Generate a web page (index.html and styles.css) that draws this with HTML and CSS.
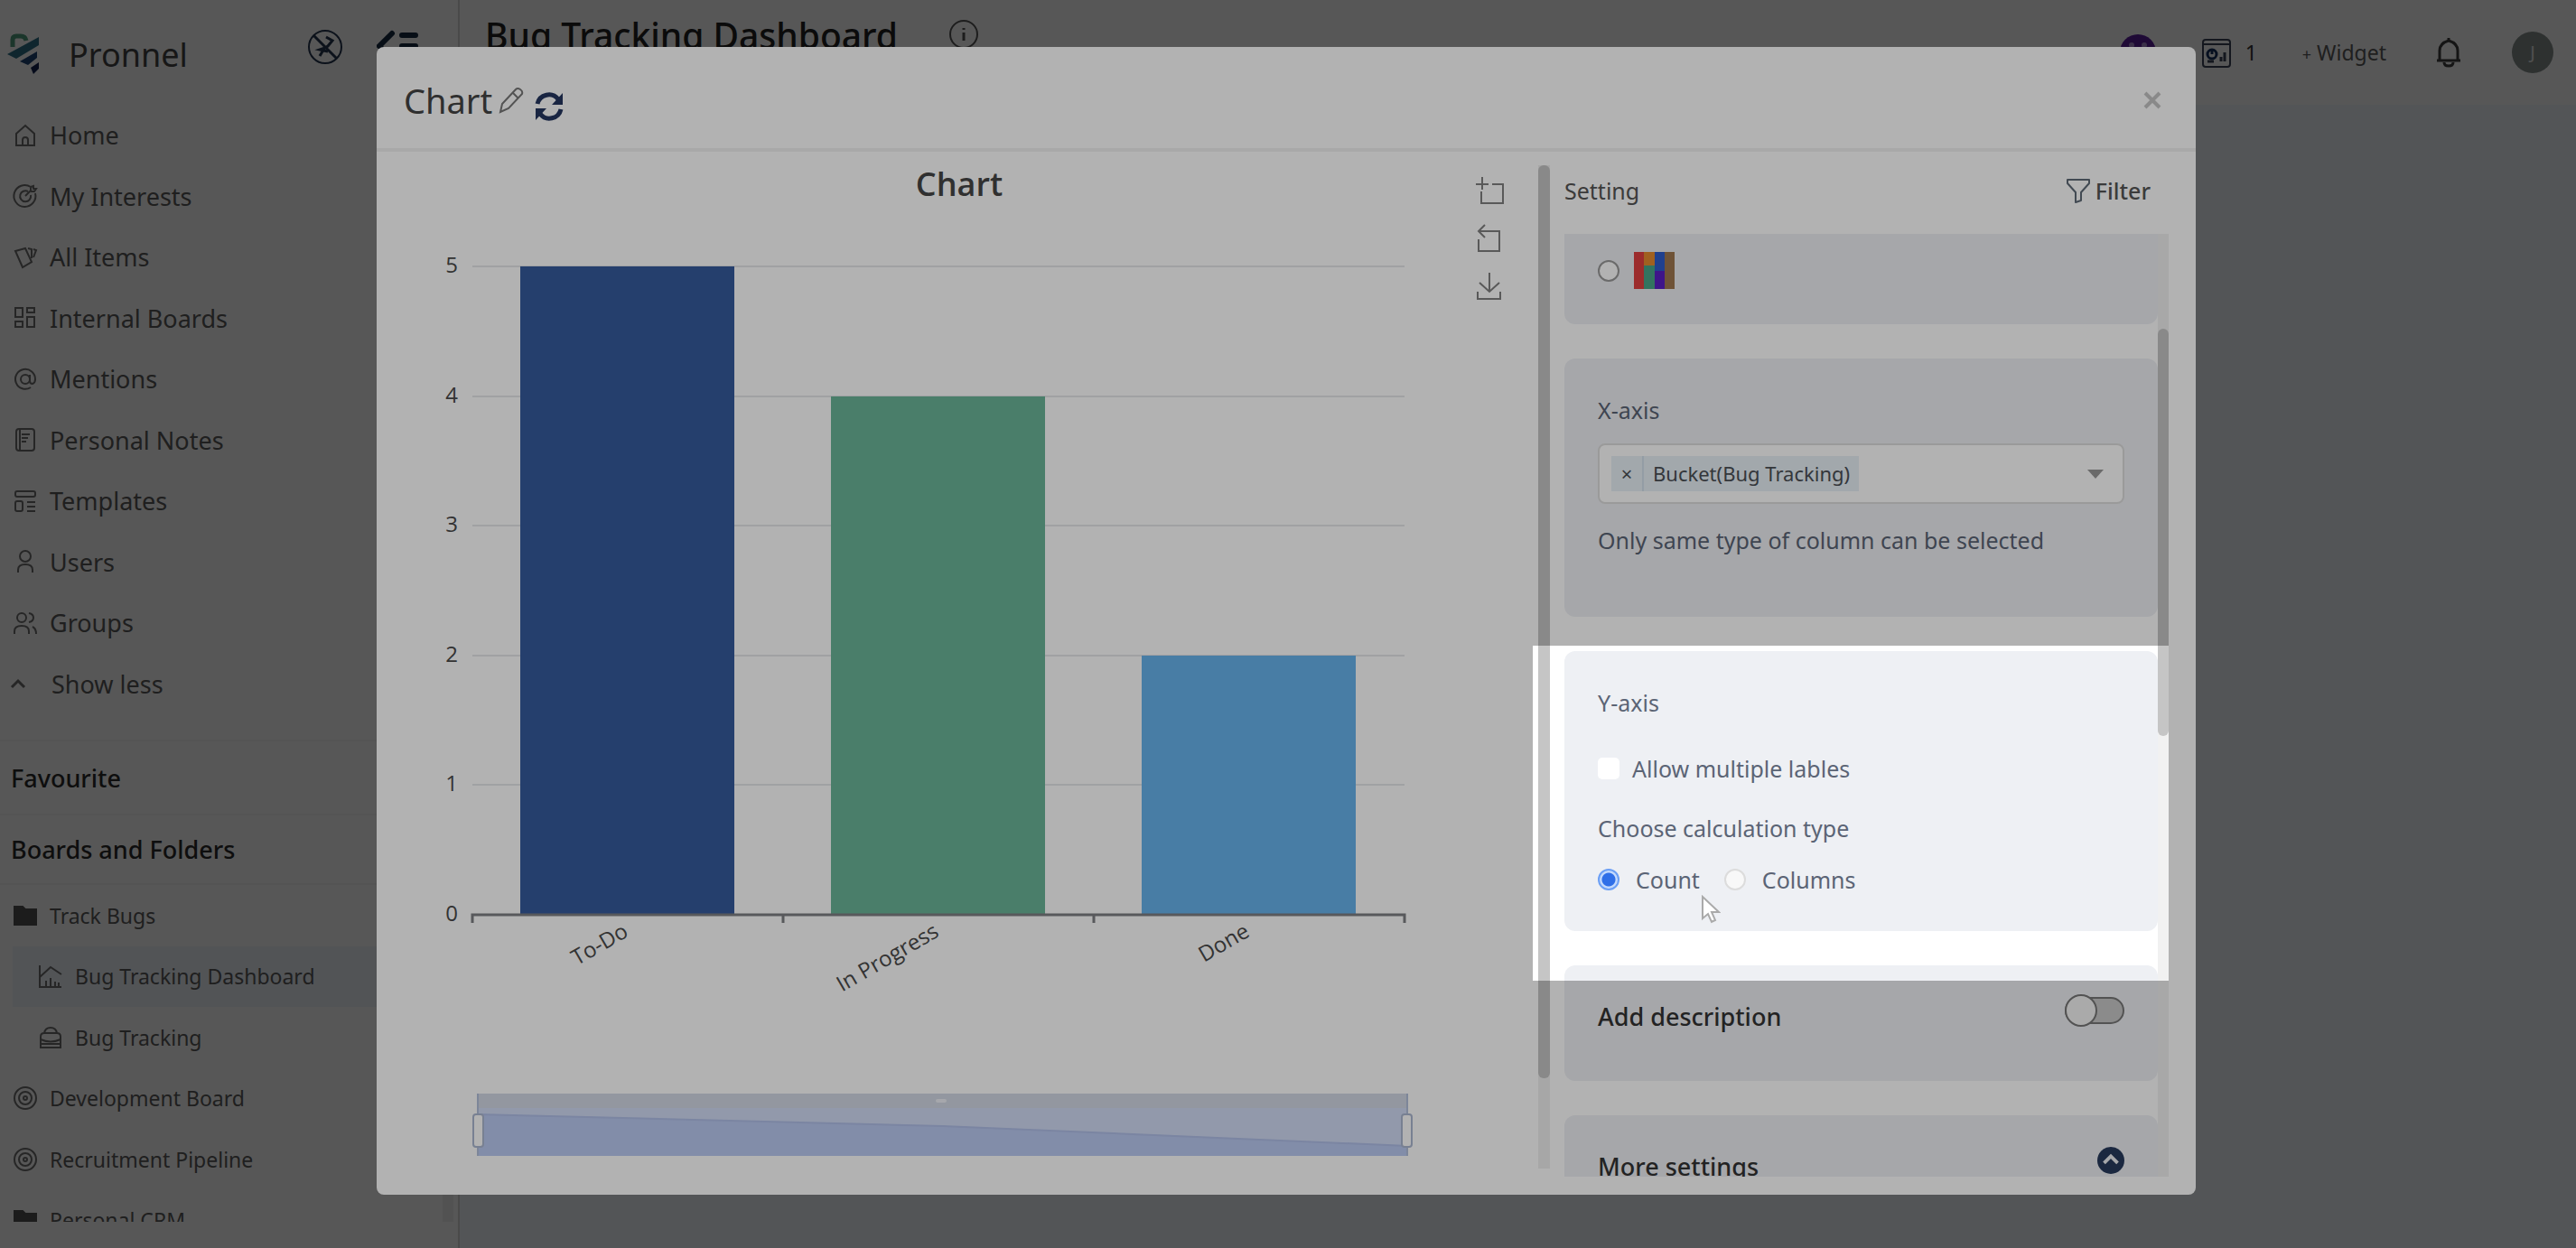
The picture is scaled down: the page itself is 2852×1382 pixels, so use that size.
FILE: index.html
```html
<!DOCTYPE html>
<html lang="en">
<head>
    <meta charset="UTF-8">
    <meta name="viewport" content="width=device-width, initial-scale=1.0">
    <title>Pronnel - Bug Tracking Dashboard</title>
    <link rel="stylesheet" href="styles.css">
</head>
<body>
    <div class="app">
        <aside class="sidebar">
            <div class="brand">
                <svg class="logo" viewBox="0 0 36 46">
                    <path d="M6 15V7q0-4 4-4h5q5 0 6 5" fill="none" stroke="#4f9a7c" stroke-width="5"/>
                    <path d="M0 23 35 4v9L10 28z" fill="#2c6e83"/>
                    <path d="M14 31 33 20v7l-10 8z" fill="#1f4474"/>
                    <path d="M26 38 35 32v7l-6 6z" fill="#12204f"/>
                </svg>
                <span class="brand-name">Pronnel</span>
                <div class="brand-tools">
                    <button class="icon-btn" aria-label="Pin off">
                        <svg width="42" height="42" viewBox="0 0 42 42" fill="none" stroke="#24344d" stroke-width="2">
                            <circle cx="21" cy="21" r="18"/>
                            <path d="M8 8 34 34" stroke-width="3"/>
                            <path d="M22 10l7 4-5 6-3 2-6 2 9 2M21 21l-6 10" stroke-width="3"/>
                        </svg>
                    </button>
                    <button class="icon-btn" aria-label="Collapse menu">
                        <svg width="46" height="42" viewBox="0 0 46 42" fill="none" stroke="#16283f" stroke-width="6" stroke-linecap="round">
                            <path d="M17 6 3 20l14 14M28 8h15M28 20h15M28 32h15"/>
                        </svg>
                    </button>
                </div>
            </div>

            <nav class="nav">
                <a class="nav-item" href="#"><svg viewBox="0 0 26 26"><path d="M3 11 13 2l10 9v13H3zM10 24v-6q0-3 3-3t3 3v6"/></svg>Home</a>
                <a class="nav-item" href="#"><svg viewBox="0 0 26 26"><path d="M19 3A12 12 0 1 0 24 10M16 8a6 6 0 1 0 3 4M13 13l6-6V3l3-1v3h3l-2 3h-4"/></svg>My Interests</a>
                <a class="nav-item" href="#"><svg viewBox="0 0 26 26"><path d="M2 6 13 3l7 15-10 6zM16 3l4 1v10M22 4l3 1-3 8"/></svg>All Items</a>
                <a class="nav-item" href="#"><svg viewBox="0 0 26 26"><path d="M2 2h8v10H2zM15 2h8v5h-8zM2 17h8v6H2zM15 12h8v11h-8z"/></svg>Internal Boards</a>
                <a class="nav-item" href="#"><svg viewBox="0 0 26 26"><circle cx="13" cy="13" r="5"/><path d="M18 8v7q0 3 3 3 3-1 3-5a11 11 0 1 0-5 9"/></svg>Mentions</a>
                <a class="nav-item" href="#"><svg viewBox="0 0 26 26"><rect x="3" y="1" width="20" height="24" rx="3"/><path d="M9 7h9M9 11h7M9 15h5M7 2v22"/></svg>Personal Notes</a>
                <a class="nav-item" href="#"><svg viewBox="0 0 26 26"><rect x="2" y="2" width="22" height="6" rx="2"/><rect x="2" y="13" width="8" height="11" rx="2"/><path d="M15 14h9M15 19h9M15 24h9"/></svg>Templates</a>
                <a class="nav-item" href="#"><svg viewBox="0 0 26 26"><circle cx="13" cy="7" r="6"/><path d="M5 25v-3q0-6 8-6t8 6v3"/></svg>Users</a>
                <a class="nav-item" href="#"><svg viewBox="0 0 26 26"><circle cx="9" cy="7" r="5"/><path d="M1 25v-3q0-6 8-6t8 6v3M17 2q5 1 5 5t-5 5M21 17q4 2 4 8"/></svg>Groups</a>
                <a class="nav-item nav-less" href="#"><svg viewBox="0 0 26 26"><path d="M-2 17 5 10l7 7" stroke-width="3"/></svg>Show less</a>
            </nav>

            <h2 class="side-title side-title-fav">Favourite</h2>
            <h2 class="side-title">Boards and Folders</h2>

            <div class="boards">
                <div class="board-list">
                    <a class="board folder" href="#"><svg viewBox="0 0 26 26"><path d="M1 3h9l3 3h12v17H1z"/></svg>Track Bugs</a>
                    <a class="board sub active" href="#"><svg viewBox="0 0 26 26"><path d="M1 1v24h24M1 14 13 3l12 8M8 24v-6M13 24v-9M18 24v-5M22 24v-4"/></svg>Bug Tracking Dashboard</a>
                    <a class="board sub" href="#"><svg viewBox="0 0 26 26"><path d="M6 8q1-6 7-6t7 6M2 12q0-4 4-4h14q4 0 4 4v12H2zM2 15q11 5 22 0M3 20h20"/></svg>Bug Tracking</a>
                    <a class="board" href="#"><svg viewBox="0 0 26 26"><circle cx="13" cy="13" r="12"/><circle cx="13" cy="13" r="7"/><circle cx="13" cy="13" r="2"/></svg>Development Board</a>
                    <a class="board" href="#"><svg viewBox="0 0 26 26"><circle cx="13" cy="13" r="12"/><circle cx="13" cy="13" r="7"/><circle cx="13" cy="13" r="2"/></svg>Recruitment Pipeline</a>
                    <a class="board folder" href="#"><svg viewBox="0 0 26 26"><path d="M1 3h9l3 3h12v17H1z"/></svg>Personal CRM</a>
                </div>
                <div class="side-scroll"></div>
            </div>
        </aside>

        <main class="main">
            <header class="topbar">
                <div class="page-name">
                    <h1>Bug Tracking Dashboard</h1>
                    <svg width="34" height="34" viewBox="0 0 34 34" fill="none" stroke="#555" stroke-width="2"><circle cx="17" cy="17" r="15"/><path d="M17 15v9M17 10v2" stroke-width="3"/></svg>
                </div>
                <div class="top-tools">
                    <span class="member">
                        <svg width="40" height="40" viewBox="0 0 40 40"><circle cx="20" cy="20" r="20" fill="#5b1f9c"/><circle cx="13" cy="12" r="3" fill="#a98bd0"/><circle cx="27" cy="12" r="3" fill="#a98bd0"/></svg>
                    </span>
                    <span class="widgets">
                        <svg width="32" height="36" viewBox="0 0 32 36" fill="none" stroke="#3a4456" stroke-width="2"><rect x="1" y="4" width="30" height="30" rx="3"/><path d="M1 9h30"/><circle cx="11" cy="20" r="5" stroke="#16305c" stroke-width="3"/><path d="M11 20v-5" stroke="#16305c" stroke-width="3"/><path d="M21 28v-5M25 28V18M6 28h7" stroke-width="3"/></svg>
                        1
                    </span>
                    <button class="add-widget"><span>+</span> Widget</button>
                    <button class="icon-btn bell" aria-label="Notifications">
                        <svg width="30" height="34" viewBox="0 0 30 34" fill="none" stroke="#3d3d3d" stroke-width="3"><path d="M2 26h26M5 26V15q0-8 10-11 10 3 10 11v11M15 4V1M10 28q0 4 5 4t5-4"/></svg>
                    </button>
                    <span class="avatar">J</span>
                </div>
            </header>
        </main>
    </div>

    <div class="backdrop">
        <div class="modal" role="dialog" aria-label="Chart">
            <header class="modal-header">
                <h2>Chart</h2>
                <button class="icon-btn" aria-label="Edit">
                    <svg width="28" height="30" viewBox="0 0 28 30" fill="none" stroke="#777" stroke-width="2"><path d="M2 28l2-9L19 3q2-2 5 0t2 5L11 24zM16 7l6 6"/></svg>
                </button>
                <button class="icon-btn refresh" aria-label="Refresh">
                    <svg width="34" height="34" viewBox="0 0 34 34" fill="none" stroke="#25365f" stroke-width="5"><path d="M4 14A13 13 0 0 1 27 9M30 20A13 13 0 0 1 7 25"/><path d="M32 2v13H20zM2 32V19h12z" fill="#25365f" stroke="none"/></svg>
                </button>
                <button class="icon-btn close" aria-label="Close">
                    <svg width="20" height="20" viewBox="0 0 20 20" fill="none" stroke="#c4c4c4" stroke-width="4"><path d="M2 2l16 16M18 2 2 18"/></svg>
                </button>
            </header>

            <div class="modal-body">
                <section class="chart-pane">
                    <svg class="chart" viewBox="0 0 1215 1111">
                        <text class="chart-title" x="645" y="34">Chart</text>
                        <g class="grid">
                            <path d="M106 112h1032M106 256h1032M106 399h1032M106 543h1032M106 686h1032"/>
                        </g>
                        <g class="y-labels">
                            <text x="90" y="119">5</text>
                            <text x="90" y="263">4</text>
                            <text x="90" y="406">3</text>
                            <text x="90" y="550">2</text>
                            <text x="90" y="693">1</text>
                            <text x="90" y="837">0</text>
                        </g>
                        <rect x="159" y="112" width="237" height="718" fill="#355b9d"/>
                        <rect x="503" y="256" width="237" height="574" fill="#6ab599"/>
                        <rect x="847" y="543" width="237" height="287" fill="#67b3ed"/>
                        <path class="axis" d="M106 839v-9h1032v9M450 830v9M794 830v9"/>
                        <g class="x-labels">
                            <text transform="translate(280 853) rotate(-30)">To-Do</text>
                            <text transform="translate(624 853) rotate(-30)">In Progress</text>
                            <text transform="translate(968 853) rotate(-30)">Done</text>
                        </g>
                        <!-- data zoom -->
                        <rect x="111" y="1028" width="1031" height="69" fill="#d2dcf5"/>
                        <rect x="111" y="1028" width="1031" height="16" fill="#d3d8e6"/>
                        <rect x="619" y="1034" width="12" height="4" rx="2" fill="#eef0f6"/>
                        <path d="M111 1051 627 1064 1142 1086V1097H111z" fill="#bbcaf2"/>
                        <path d="M111 1051 627 1064 1142 1086" fill="none" stroke="#b0bfe8" stroke-width="2"/>
                        <path d="M112 1028v69M1141 1028v69" stroke="#b4c0dc" stroke-width="2"/>
                        <rect class="handle" x="107" y="1051" width="11" height="36" rx="3"/>
                        <rect class="handle" x="1135" y="1051" width="11" height="36" rx="3"/>
                    </svg>
                    <div class="toolbox">
                        <button class="icon-btn" aria-label="Area zoom"><svg viewBox="0 0 32 32"><path d="M0 9h14M7 1v14M18 9h12v21H6V17"/></svg></button>
                        <button class="icon-btn" aria-label="Restore zoom"><svg viewBox="0 0 32 32"><path d="M10 1 3 8l7 7M3 8h23v22H3V17"/></svg></button>
                        <button class="icon-btn" aria-label="Download"><svg viewBox="0 0 32 32"><path d="M15 1v21M4 12l11 10 11-10M2 22v8h25v-8"/></svg></button>
                    </div>
                    <div class="scrollbar chart-scroll"><div class="thumb"></div></div>
                </section>

                <section class="settings">
                    <div class="settings-head">
                        <h3>Setting</h3>
                        <button class="filter-btn">
                            <svg width="28" height="28" viewBox="0 0 28 28" fill="none" stroke="#5f6b78" stroke-width="2" stroke-linejoin="round"><path d="M2 2h24v4l-9 10v9l-6 2V16L2 6z"/></svg>
                            Filter
                        </button>
                    </div>
                    <div class="settings-scroll">
                        <div class="cards">
                            <div class="card palette">
                                <label class="option">
                                    <input type="radio" name="palette" aria-label="Custom colours">
                                    <svg width="45" height="41" viewBox="0 0 45 41">
                                        <path d="M0 0h11v41H0z" fill="#e0403f"/>
                                        <path d="M11 0h12v15H11z" fill="#e68a2e"/>
                                        <path d="M11 15h12v26H11z" fill="#48a588"/>
                                        <path d="M23 0h11v21H23z" fill="#2e5ccc"/>
                                        <path d="M23 21h11v20H23z" fill="#5a1fc4"/>
                                        <path d="M34 0h11v41H34z" fill="#a07850"/>
                                    </svg>
                                </label>
                            </div>

                            <div class="card x-axis">
                                <label for="xColumn">X-axis</label>
                                <div class="multi-select">
                                    <div class="tag"><button aria-label="Remove">×</button><span>Bucket(Bug Tracking)</span></div>
                                    <select id="xColumn"><option></option></select>
                                    <svg width="18" height="10" viewBox="0 0 18 10"><path d="M0 0h18L9 10z" fill="#999"/></svg>
                                </div>
                                <p>Only same type of column can be selected</p>
                            </div>

                            <div class="card y-axis">
                                <p>Y-axis</p>
                                <label class="option check"><input type="checkbox"> Allow multiple lables</label>
                                <p class="calc">Choose calculation type</p>
                                <div class="radios">
                                    <label class="option"><input type="radio" name="calc" checked> Count</label>
                                    <label class="option"><input type="radio" name="calc"> Columns</label>
                                </div>
                            </div>

                            <div class="card card-row">
                                <label for="addDescription">Add description</label>
                                <input type="checkbox" class="switch" id="addDescription">
                            </div>

                            <div class="card card-row">
                                <h4>More settings</h4>
                                <button class="icon-btn" aria-label="Expand">
                                    <svg width="30" height="30" viewBox="0 0 32 32"><circle cx="16" cy="16" r="16" fill="#283a5c"/><path d="M8 19l8-8 8 8" fill="none" stroke="#eef0f4" stroke-width="4"/></svg>
                                </button>
                            </div>
                        </div>
                        <div class="scrollbar settings-bar"><div class="thumb"></div></div>
                    </div>
                </section>

                <!-- tour highlight, everything outside of it is dimmed -->
                <div class="spotlight">
                    <svg class="pointer" width="22" height="32" viewBox="0 0 22 32"><path d="M2 2v24l6-5 4 9 4-2-4-9h8z" fill="#fff" stroke="#aaa" stroke-width="2"/></svg>
                </div>
            </div>
        </div>
    </div>
</body>
</html>
```
FILE: styles.css
```css
* {
    box-sizing: border-box;
}
body {
    margin: 0;
    font-family: "Noto Sans", "Open Sans", sans-serif;
    font-size: 27px;
    color: #5a5a5a;
    overflow: hidden;
}
h1, h2, h3, h4, p {
    margin: 0;
    font-weight: 400;
}
a {
    color: inherit;
    text-decoration: none;
}
button {
    font: inherit;
    color: inherit;
    background: none;
    border: none;
    padding: 0;
    cursor: pointer;
}
svg {
    display: block;
}
.icon-btn {
    display: flex;
}

/* page */
.app {
    display: flex;
    height: 100vh;
    background-color: #edf2f8;
}
.sidebar {
    display: flex;
    flex-direction: column;
    width: 509px;
    padding-bottom: 29px;
    background-color: #f9f9f9;
    border-right: 2px solid #d4d4d4;
}
.brand {
    display: flex;
    align-items: center;
    height: 116px;
    padding: 4px 44px 0 8px;
    flex-shrink: 0;
}
.logo {
    width: 36px;
    height: 46px;
}
.brand-name {
    margin-left: 32px;
    font-size: 36px;
    color: #444;
}
.brand-tools {
    display: flex;
    align-items: center;
    align-self: flex-start;
    gap: 36px;
    height: 96px;
    margin-left: auto;
}
.nav {
    display: grid;
    grid-auto-rows: 1fr;
    height: 675px;
    margin-bottom: 28px;
    flex-shrink: 0;
}
.nav-item, .board {
    display: flex;
    align-items: center;
    gap: 14px;
    padding-left: 15px;
}
.nav-item svg, .board svg {
    width: 26px;
    height: 26px;
    fill: none;
    stroke: #6e6e6e;
    stroke-width: 2;
    overflow: visible;
}
.nav-less {
    gap: 16px;
}
.side-title {
    height: 77px;
    padding-left: 12px;
    border-top: 2px solid #efefef;
    font-size: 27px;
    font-weight: 500;
    line-height: 75px;
    color: #2a2a2a;
    flex-shrink: 0;
}
.side-title-fav {
    height: 82px;
    line-height: 82px;
}
.boards {
    display: flex;
    flex: 1;
    min-height: 0;
    overflow: hidden;
    border-top: 2px solid #efefef;
}
.board-list {
    display: grid;
    grid-auto-rows: 1fr;
    flex: 1;
    height: 405px;
    font-size: 23px;
}
.board.sub {
    margin-left: 14px;
    padding-left: 29px;
}
.board.active {
    background-color: #eaf0f7;
}
.board.folder svg {
    fill: #505050;
    stroke: #505050;
}
.side-scroll {
    width: 12px;
    margin-right: 5px;
    background-color: #ebebeb;
}
.main {
    flex: 1;
}
.topbar {
    display: flex;
    justify-content: space-between;
    height: 116px;
    padding: 0 25px 0 28px;
    background-color: #f9f9f9;
}
.page-name {
    display: flex;
    align-items: center;
    gap: 56px;
    height: 76px;
}
.page-name h1 {
    font-size: 39px;
    font-weight: 500;
    color: #222;
}
.top-tools {
    display: flex;
    align-items: center;
    font-size: 23px;
}
.member {
    margin-right: 51px;
}
.widgets {
    display: flex;
    align-items: center;
    gap: 16px;
    margin-right: 50px;
    color: #333;
}
.add-widget {
    margin-right: 54px;
}
.add-widget span {
    font-size: 18px;
}
.bell {
    margin-right: 55px;
}
.avatar {
    width: 46px;
    height: 46px;
    border-radius: 50%;
    background-color: #848d8a;
    color: #e4e4e4;
    font-size: 20px;
    line-height: 46px;
    text-align: center;
}

/* modal */
.backdrop {
    position: fixed;
    inset: 0;
    display: flex;
    padding: 52px 421px 59px 417px;
    background-color: rgba(0, 0, 0, 0.5);
}
.modal {
    display: flex;
    flex-direction: column;
    flex: 1;
    border-radius: 8px;
    background-color: #fff;
}
.modal-header {
    display: flex;
    align-items: center;
    height: 116px;
    padding: 6px 38px 0 30px;
    border-bottom: 4px solid #f1f1f1;
    flex-shrink: 0;
}
.modal-header h2 {
    margin-right: 7px;
    font-size: 38px;
    color: #444;
}
.refresh {
    margin: 14px 0 0 11px;
}
.close {
    margin-left: auto;
}
.modal-body {
    position: relative;
    display: flex;
    gap: 16px;
    flex: 1;
    min-height: 0;
    padding: 15px 30px 20px 0;
}
.chart-pane {
    display: flex;
    align-items: flex-start;
    flex: 1;
    margin-bottom: -9px;
}
.chart {
    flex: 1;
    min-width: 0;
    font-family: "Open Sans", sans-serif;
    font-size: 24px;
}
.chart-title {
    font-size: 36px;
    font-weight: 600;
    fill: #464646;
    text-anchor: middle;
}
.grid {
    stroke: #e6e7ea;
    stroke-width: 2;
}
.y-labels, .x-labels {
    fill: #4a4a4a;
    text-anchor: end;
}
.axis {
    fill: none;
    stroke: #7e8084;
    stroke-width: 3;
}
.handle {
    fill: #fff;
    stroke: #acb8d1;
    stroke-width: 2;
}
.toolbox {
    display: flex;
    flex-direction: column;
    gap: 21px;
    margin: 12px 37px 0 2px;
}
.toolbox svg {
    width: 32px;
    height: 32px;
    fill: none;
    stroke: #808080;
    stroke-width: 2;
}
.scrollbar {
    background-color: #efefef;
}
.thumb {
    border-radius: 6px;
    background-color: #c5c5c5;
}
.chart-scroll {
    width: 13px;
    height: calc(100% - 18px);
}
.chart-scroll .thumb {
    height: 91%;
}
.settings {
    display: flex;
    flex-direction: column;
    width: 669px;
    color: #5b6475;
    font-size: 25px;
    line-height: 36px;
}
.settings-head {
    display: flex;
    justify-content: space-between;
    height: 76px;
    padding: 10px 20px 30px 0;
    color: #555;
    flex-shrink: 0;
}
.settings-head h3 {
    font-size: 25px;
}
.filter-btn {
    display: flex;
    align-items: center;
    gap: 5px;
    font-weight: 500;
}
.settings-scroll {
    display: flex;
    flex: 1;
    min-height: 0;
    overflow: hidden;
}
.cards {
    display: flex;
    flex-direction: column;
    flex: 1;
    gap: 38px;
}
.card {
    padding: 39px 37px;
    border-radius: 12px;
    background-color: #eef0f4;
    flex-shrink: 0;
}
.palette {
    padding: 20px 37px 39px;
    border-radius: 0 0 12px 12px;
}
.option {
    display: flex;
    align-items: center;
    gap: 18px;
}
.palette .option {
    gap: 16px;
}
.option input {
    appearance: none;
    width: 24px;
    height: 24px;
    margin: 0;
    border: 2px solid #dcdcdc;
    border-radius: 50%;
    background-color: #f8f8f8;
}
.palette input {
    border-color: #999;
    background-color: #fff;
}
.option input:checked {
    border-color: #6b9ff5;
    background: radial-gradient(circle, #2f6fe8 0 7px, #c4dafd 8px);
}
.option input[type="checkbox"] {
    border: none;
    border-radius: 5px;
    background-color: #fff;
}
.x-axis {
    padding-bottom: 67px;
}
.x-axis label {
    display: block;
}
.multi-select {
    display: flex;
    align-items: center;
    height: 67px;
    margin: 19px 0 22px;
    padding: 0 21px 0 13px;
    border: 2px solid #ddd;
    border-radius: 8px;
    background-color: #fff;
}
.multi-select select {
    flex: 1;
    height: 100%;
    appearance: none;
    border: none;
    background: none;
}
.tag {
    display: flex;
    height: 39px;
    background-color: #e9f1f7;
    color: #4b4f55;
    font-size: 22px;
    line-height: 39px;
}
.tag button {
    width: 36px;
    border-right: 2px solid #d3e1ec;
}
.tag span {
    padding: 0 10px;
}
.check {
    gap: 14px;
    margin: 37px 0 30px;
}
.radios {
    display: flex;
    gap: 27px;
    margin-top: 21px;
}
.card-row {
    display: flex;
    align-items: flex-start;
    justify-content: space-between;
    padding: 35px 37px 49px;
    color: #333;
    font-size: 27px;
    font-weight: 500;
    line-height: 44px;
}
.card-row h4 {
    font-weight: 500;
}
.switch {
    appearance: none;
    display: flex;
    align-items: center;
    width: 66px;
    height: 30px;
    margin: 0;
    border: 2px solid #777;
    border-radius: 16px;
    background-color: #c8c8c8;
}
.switch::before {
    content: "";
    width: 32px;
    height: 32px;
    margin-left: -2px;
    border: 2px solid #777;
    border-radius: 50%;
    background-color: #f4f4f4;
    flex-shrink: 0;
}
.settings-bar {
    width: 12px;
    padding-top: 105px;
    background-color: #f1f1f1;
}
.settings-bar .thumb {
    height: 451px;
}
.spotlight {
    position: absolute;
    top: 547px;
    right: 30px;
    width: 704px;
    height: 371px;
    box-shadow: 0 0 0 3000px rgba(0, 0, 0, 0.3);
    pointer-events: none;
}
.pointer {
    position: absolute;
    top: 276px;
    left: 186px;
}
```
